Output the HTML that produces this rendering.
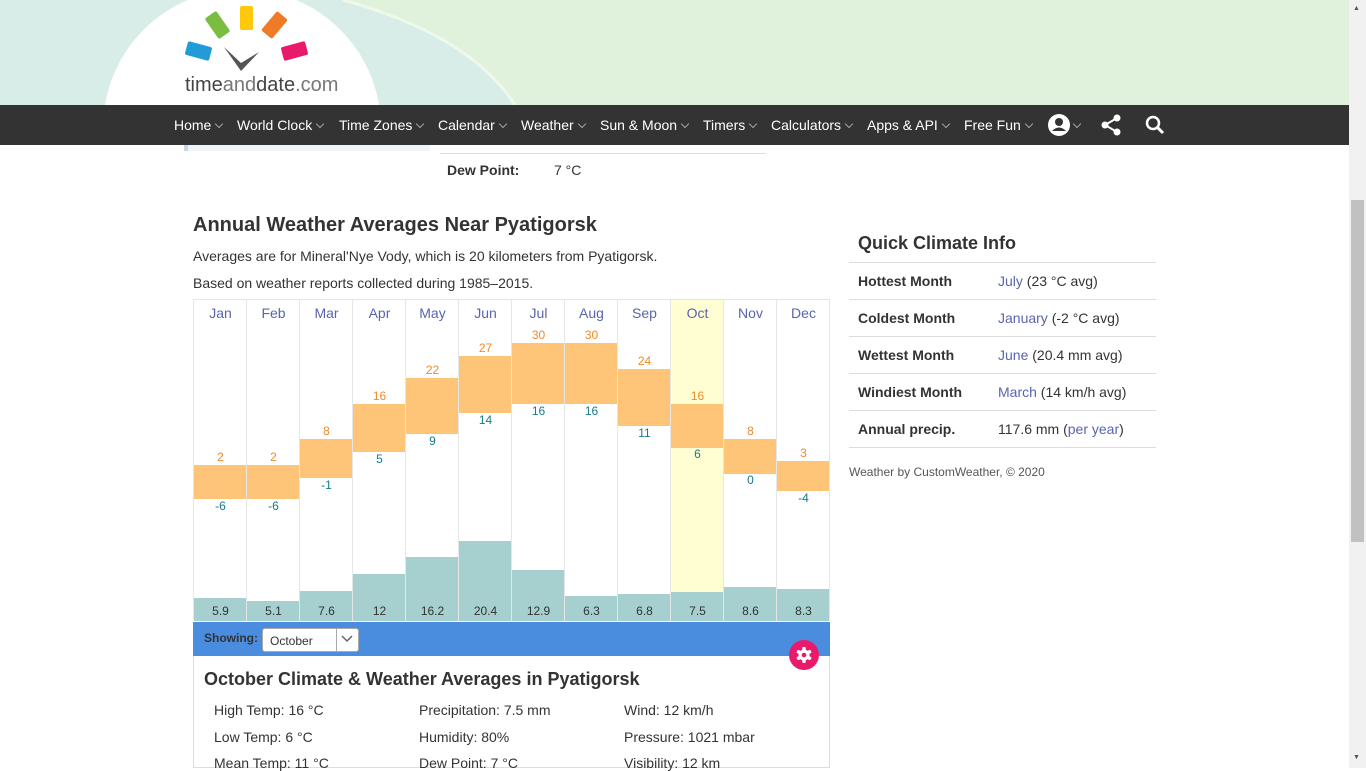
<!DOCTYPE html>
<html><head><meta charset="utf-8"><style>
*{box-sizing:border-box;margin:0;padding:0}
body{width:1366px;height:768px;overflow:hidden;position:relative;background:#fff;font-family:"Liberation Sans",Arial,sans-serif;color:#333}
.a{position:absolute}
.nav{top:105px;left:0;width:1349px;height:40px;background:#333;color:#fff;font-size:14px}
.nav span{position:absolute;top:12px;white-space:nowrap}
.nav i{display:inline-block;width:6px;height:6px;border-right:1.5px solid #9aa3ad;border-bottom:1.5px solid #9aa3ad;transform:rotate(45deg);margin-left:5px;position:relative;top:-3px}
.col{position:absolute;top:299px;width:53px;height:322px;border-left:1px solid #e6e6e6}
.m{position:absolute;top:305px;width:53px;text-align:center;color:#5a64b0;font-size:14px}
.bar{position:absolute;width:52px;background:#fec477}
.hi{position:absolute;width:53px;text-align:center;color:#f08a24;font-size:12px}
.lo{position:absolute;width:53px;text-align:center;color:#157a8a;font-size:12px}
.pr{position:absolute;width:52px;background:#a6d0cf;bottom:147px}
.pv{position:absolute;top:604px;width:53px;text-align:center;font-size:12px;color:#333}
.qi{position:absolute;left:849px;width:307px;height:37px;border-bottom:1px solid #ddd;font-size:14px}
.qi b{position:absolute;left:9px;top:10px}
.qi span{position:absolute;left:149px;top:10px}
.qi a{color:#5a64b0}
.d{position:absolute;font-size:14px;color:#333}
</style></head><body>
<!-- header -->
<div class="a" style="left:0;top:0;width:1349px;height:105px;background:#e0f2dc;overflow:hidden">
<svg class="a" style="left:0;top:0" width="600" height="105"><path d="M0 0 L343 0 Q470 35 515 105 L0 105 Z" fill="#d8ede7"/><path d="M343 0 Q470 35 515 105" stroke="#eef8ec" stroke-width="3" fill="none"/></svg>
<div class="a" style="left:103px;top:-11px;width:278px;height:278px;border-radius:50%;background:#fff"></div>
<div class="a" style="left:186px;top:44px;width:25px;height:14px;background:#229cd9;border-radius:2px;transform:rotate(15deg)"></div>
<div class="a" style="left:205px;top:18px;width:25px;height:14px;background:#7bbd40;border-radius:2px;transform:rotate(55deg)"></div>
<div class="a" style="left:240px;top:6px;width:13px;height:24px;background:#fec90a;border-radius:2px"></div>
<div class="a" style="left:262px;top:18px;width:25px;height:14px;background:#ef7b27;border-radius:2px;transform:rotate(-50deg)"></div>
<div class="a" style="left:282px;top:44px;width:25px;height:14px;background:#ea1a6b;border-radius:2px;transform:rotate(-15deg)"></div>
<svg class="a" style="left:222px;top:45px" width="40" height="28"><path d="M2 2 L19 26 L37 7 L19 18 Z" fill="#555"/></svg>
<div class="a" style="left:185px;top:74px;font-size:20px;color:#444">time<span style="color:#777">and</span>date<span style="color:#777">.com</span></div>
</div>
<div class="a nav">
<span style="left:174px">Home<i></i></span><span style="left:237px">World Clock<i></i></span><span style="left:339px">Time Zones<i></i></span><span style="left:438px">Calendar<i></i></span><span style="left:521px">Weather<i></i></span><span style="left:600px">Sun &amp; Moon<i></i></span><span style="left:703px">Timers<i></i></span><span style="left:771px">Calculators<i></i></span><span style="left:867px">Apps &amp; API<i></i></span><span style="left:964px">Free Fun<i></i></span>
<svg class="a" style="left:1048px;top:9px" width="22" height="22"><circle cx="11" cy="11" r="11" fill="#fff"/><circle cx="11" cy="8" r="4" fill="#333"/><path d="M4 17 Q11 10 18 17" fill="#333"/></svg><span style="left:1069px"><i></i></span>
<svg class="a" style="left:1100px;top:9px" width="22" height="22"><circle cx="17" cy="4" r="3.5" fill="#fff"/><circle cx="5" cy="11" r="3.5" fill="#fff"/><circle cx="17" cy="18" r="3.5" fill="#fff"/><path d="M17 4 L5 11 L17 18" stroke="#fff" stroke-width="2" fill="none"/></svg>
<svg class="a" style="left:1145px;top:10px" width="20" height="20"><circle cx="8" cy="8" r="6" stroke="#fff" stroke-width="2.5" fill="none"/><path d="M12 12 L18 18" stroke="#fff" stroke-width="3"/></svg>
</div>
<div class="a" style="left:184px;top:145px;width:246px;height:6px;background:#eef4fa;border-left:4px solid #c9d6e3"></div>
<div class="a" style="left:440px;top:153px;width:326px;height:1px;background:#ddd"></div>
<div class="d" style="left:447px;top:162px;font-weight:bold">Dew Point:</div>
<div class="d" style="left:554px;top:162px">7 °C</div>
<!-- scrollbar -->
<div class="a" style="left:1349px;top:0;width:17px;height:768px;background:#f1f1f1"></div>
<div class="a" style="left:1351px;top:200px;width:13px;height:342px;background:#c1c1c1"></div>
<div class="a" style="left:1353px;top:5px;font-size:7px;color:#555">▲</div>
<div class="a" style="left:1353px;top:754px;font-size:7px;color:#555">▼</div>

<div class="a" style="left:193px;top:214px;font-size:20px;font-weight:bold;color:#333">Annual Weather Averages Near Pyatigorsk</div>
<div class="d" style="left:193px;top:248px">Averages are for Mineral'Nye Vody, which is 20 kilometers from Pyatigorsk.</div>
<div class="d" style="left:193px;top:275px">Based on weather reports collected during 1985–2015.</div>

<!-- chart -->
<div class="a" style="left:193px;top:299px;width:637px;height:322px;border:1px solid #e6e6e6"></div>
<div class="a" style="left:671px;top:300px;width:52px;height:321px;background:#fefed2"></div>
<div class="col" style="left:193px"></div><div class="col" style="left:246px"></div><div class="col" style="left:299px"></div><div class="col" style="left:352px"></div><div class="col" style="left:405px"></div><div class="col" style="left:458px"></div><div class="col" style="left:511px"></div><div class="col" style="left:564px"></div><div class="col" style="left:617px"></div><div class="col" style="left:670px"></div><div class="col" style="left:723px"></div><div class="col" style="left:776px"></div>
<div class="m" style="left:194px">Jan</div><div class="m" style="left:247px">Feb</div><div class="m" style="left:300px">Mar</div><div class="m" style="left:353px">Apr</div><div class="m" style="left:406px">May</div><div class="m" style="left:459px">Jun</div><div class="m" style="left:512px">Jul</div><div class="m" style="left:565px">Aug</div><div class="m" style="left:618px">Sep</div><div class="m" style="left:671px">Oct</div><div class="m" style="left:724px">Nov</div><div class="m" style="left:777px">Dec</div>

<div class="bar" style="left:194px;top:465px;height:34px"></div>
<div class="bar" style="left:247px;top:465px;height:34px"></div>
<div class="bar" style="left:300px;top:439px;height:39px"></div>
<div class="bar" style="left:353px;top:404px;height:48px"></div>
<div class="bar" style="left:406px;top:378px;height:56px"></div>
<div class="bar" style="left:459px;top:356px;height:57px"></div>
<div class="bar" style="left:512px;top:343px;height:61px"></div>
<div class="bar" style="left:565px;top:343px;height:61px"></div>
<div class="bar" style="left:618px;top:369px;height:57px"></div>
<div class="bar" style="left:671px;top:404px;height:44px"></div>
<div class="bar" style="left:724px;top:439px;height:35px"></div>
<div class="bar" style="left:777px;top:461px;height:30px"></div>

<div class="hi" style="left:194px;top:450px">2</div><div class="hi" style="left:247px;top:450px">2</div><div class="hi" style="left:300px;top:424px">8</div><div class="hi" style="left:353px;top:389px">16</div><div class="hi" style="left:406px;top:363px">22</div><div class="hi" style="left:459px;top:341px">27</div><div class="hi" style="left:512px;top:328px">30</div><div class="hi" style="left:565px;top:328px">30</div><div class="hi" style="left:618px;top:354px">24</div><div class="hi" style="left:671px;top:389px">16</div><div class="hi" style="left:724px;top:424px">8</div><div class="hi" style="left:777px;top:446px">3</div>

<div class="lo" style="left:194px;top:499px">-6</div><div class="lo" style="left:247px;top:499px">-6</div><div class="lo" style="left:300px;top:478px">-1</div><div class="lo" style="left:353px;top:452px">5</div><div class="lo" style="left:406px;top:434px">9</div><div class="lo" style="left:459px;top:413px">14</div><div class="lo" style="left:512px;top:404px">16</div><div class="lo" style="left:565px;top:404px">16</div><div class="lo" style="left:618px;top:426px">11</div><div class="lo" style="left:671px;top:447px">6</div><div class="lo" style="left:724px;top:473px">0</div><div class="lo" style="left:777px;top:491px">-4</div>

<div class="pr" style="left:194px;top:598px"></div><div class="pr" style="left:247px;top:601px"></div><div class="pr" style="left:300px;top:591px"></div><div class="pr" style="left:353px;top:574px"></div><div class="pr" style="left:406px;top:557px"></div><div class="pr" style="left:459px;top:541px"></div><div class="pr" style="left:512px;top:570px"></div><div class="pr" style="left:565px;top:596px"></div><div class="pr" style="left:618px;top:594px"></div><div class="pr" style="left:671px;top:592px"></div><div class="pr" style="left:724px;top:587px"></div><div class="pr" style="left:777px;top:589px"></div>
<div class="pv" style="left:194px">5.9</div><div class="pv" style="left:247px">5.1</div><div class="pv" style="left:300px">7.6</div><div class="pv" style="left:353px">12</div><div class="pv" style="left:406px">16.2</div><div class="pv" style="left:459px">20.4</div><div class="pv" style="left:512px">12.9</div><div class="pv" style="left:565px">6.3</div><div class="pv" style="left:618px">6.8</div><div class="pv" style="left:671px">7.5</div><div class="pv" style="left:724px">8.6</div><div class="pv" style="left:777px">8.3</div>

<!-- showing bar -->
<div class="a" style="left:193px;top:622px;width:637px;height:34px;background:#4a8ddf"></div>
<div class="a" style="left:204px;top:631px;font-size:12px;font-weight:bold;color:#333">Showing:</div>
<div class="a" style="left:262px;top:628px;width:97px;height:24px;background:#fff;border:1px solid #aaa;border-radius:3px;font-size:12px;padding:5px 0 0 7px">October</div>
<div class="a" style="left:336px;top:629px;width:1px;height:22px;background:#aaa"></div>
<svg class="a" style="left:341px;top:634px" width="12" height="10"><path d="M1 2 L6 7 L11 2" stroke="#666" stroke-width="1.5" fill="none"/></svg>
<div class="a" style="left:193px;top:656px;width:637px;height:112px;border:1px solid #ddd;border-top:none"></div>
<div class="a" style="left:789px;top:640px;width:30px;height:30px;border-radius:50%;background:#ea1a6b"></div>
<svg class="a" style="left:795px;top:646px" width="18" height="18" viewBox="0 0 18 18"><g fill="#fff"><circle cx="9" cy="9" r="5.5"/><rect x="7.3" y="1" width="3.4" height="16" rx="1"/><rect x="7.3" y="1" width="3.4" height="16" rx="1" transform="rotate(60 9 9)"/><rect x="7.3" y="1" width="3.4" height="16" rx="1" transform="rotate(120 9 9)"/></g><circle cx="9" cy="9" r="2.3" fill="#ea1a6b"/></svg>
<div class="a" style="left:204px;top:669px;font-size:18px;font-weight:bold;color:#333">October Climate &amp; Weather Averages in Pyatigorsk</div>
<div class="d" style="left:214px;top:702px">High Temp: 16 °C</div><div class="d" style="left:419px;top:702px">Precipitation: 7.5 mm</div><div class="d" style="left:624px;top:702px">Wind: 12 km/h</div>
<div class="d" style="left:214px;top:729px">Low Temp: 6 °C</div><div class="d" style="left:419px;top:729px">Humidity: 80%</div><div class="d" style="left:624px;top:729px">Pressure: 1021 mbar</div>
<div class="d" style="left:214px;top:755px">Mean Temp: 11 °C</div><div class="d" style="left:419px;top:755px">Dew Point: 7 °C</div><div class="d" style="left:624px;top:755px">Visibility: 12 km</div>

<!-- quick climate -->
<div class="a" style="left:858px;top:233px;font-size:18px;font-weight:bold;color:#333">Quick Climate Info</div>
<div class="a" style="left:849px;top:262px;width:307px;height:1px;background:#ddd"></div>
<div class="qi" style="top:263px"><b>Hottest Month</b><span><a>July</a> (23 °C avg)</span></div>
<div class="qi" style="top:300px"><b>Coldest Month</b><span><a>January</a> (-2 °C avg)</span></div>
<div class="qi" style="top:337px"><b>Wettest Month</b><span><a>June</a> (20.4 mm avg)</span></div>
<div class="qi" style="top:374px"><b>Windiest Month</b><span><a>March</a> (14 km/h avg)</span></div>
<div class="qi" style="top:411px"><b>Annual precip.</b><span>117.6 mm (<a>per year</a>)</span></div>
<div class="a" style="left:849px;top:465px;font-size:12px;color:#555">Weather by CustomWeather, © 2020</div>
</body></html>
